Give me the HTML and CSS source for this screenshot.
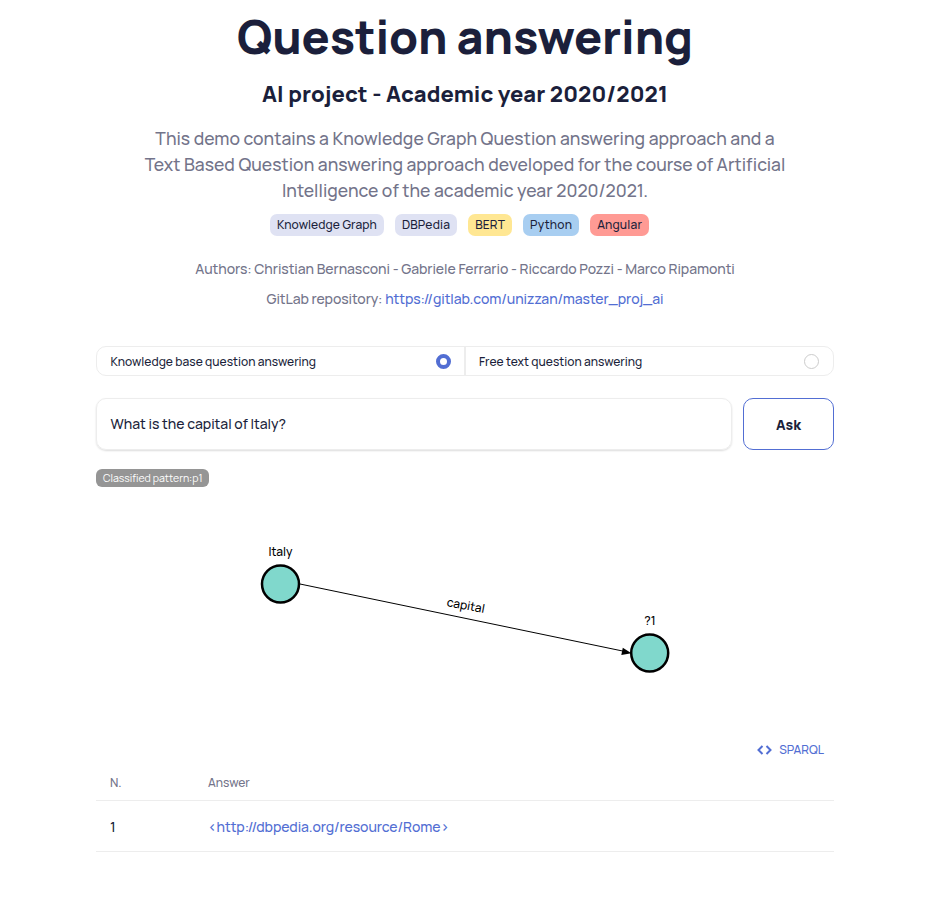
FILE: index.html
```html
<!DOCTYPE html>
<html lang="en">
<head>
<meta charset="utf-8">
<title>Question answering</title>
<link rel="stylesheet" href="styles.css">
</head>
<body>
<main class="page">
  <header class="intro">
    <h1 class="title">Question answering</h1>
    <h2 class="subtitle">AI project - Academic year 2020/2021</h2>
    <p class="lead">This demo contains a Knowledge Graph Question answering approach and a<br>Text Based Question answering approach developed for the course of Artificial<br>Intelligence of the academic year 2020/2021.</p>
    <div class="tags">
      <span class="tag">Knowledge Graph</span>
      <span class="tag">DBPedia</span>
      <span class="tag bert">BERT</span>
      <span class="tag python">Python</span>
      <span class="tag angular">Angular</span>
    </div>
    <p class="meta">Authors: Christian Bernasconi - Gabriele Ferrario - Riccardo Pozzi - Marco Ripamonti</p>
    <p class="meta">GitLab repository: <a class="link" href="#">https://gitlab.com/unizzan/master_proj_ai</a></p>
  </header>
  <div class="modes">
    <label class="mode">Knowledge base question answering<i class="radio checked"></i></label>
    <label class="mode">Free text question answering<i class="radio"></i></label>
  </div>
  <div class="ask-row">
    <div class="field">What is the capital of Italy?</div>
    <button class="ask">Ask</button>
  </div>
  <div class="badge">Classified pattern:p1</div>
  <svg class="graph" width="738" height="240" viewBox="96 495 738 240">
    <line x1="300" y1="584" x2="624" y2="651.3" stroke="#000" stroke-width="1"/>
    <path d="M631.5 653.3L621.300 655L622.800 647.800Z"/>
    <circle class="node" cx="280.500" cy="584" r="18.500"/>
    <circle class="node" cx="649.700" cy="653" r="18.500"/>
    <text x="280.500" y="556">Italy</text>
    <text x="650" y="625">?1</text>
    <text transform="translate(465 609.500) rotate(10.500)">capital</text>
  </svg>
  <div class="actions"><a class="sparql" href="#"><svg width="15" height="10" viewBox="0 0 15 10"><path d="M5.500 1L1.500 5L5.500 9M9.500 1L13.500 5L9.500 9"/></svg><span>SPARQL</span></a></div>
  <table class="answers">
    <thead><tr><th class="num">N.</th><th>Answer</th></tr></thead>
    <tbody><tr><td>1</td><td><a class="link" href="#">&lt;http://dbpedia.org/resource/Rome&gt;</a></td></tr></tbody>
  </table>
</main>
</body>
</html>
```
FILE: styles.css
```css
* { box-sizing: border-box; }
body { margin: 0; background: #fff; color: #1b1f3b; font-family: Manrope, Inter, sans-serif; font-size: 14px; font-weight: 500; }
.page { width: 738px; margin-left: 96px; padding-top: 8px; }
.intro { text-align: center; }
.title { margin: 0; font-size: 46.5px; line-height: 56px; font-weight: 800; letter-spacing: -0.17px; }
.subtitle { margin: 16px 0 0; font-size: 22px; line-height: 28px; font-weight: 800; letter-spacing: 0.08px; }
.lead { margin: 17px 0 0; font-size: 17.5px; line-height: 26px; letter-spacing: 0.025px; color: #73748a; }
.tags { display: flex; justify-content: center; gap: 11px; margin: 11px 11px 0 0; }
.tag { height: 22px; padding: 0 7px; border-radius: 7px; font-size: 12px; line-height: 22px; letter-spacing: 0.18px; background: #dfe2f3; }
.tag:first-child { letter-spacing: 0.076px; }
.bert { background: #ffe793; }
.python { background: #a8cef1; }
.angular { background: #ff9a94; }
.meta { margin: 0; padding-top: 6px; line-height: 24px; letter-spacing: -0.07px; color: #73748a; }
.tags + .meta { margin-top: 15px; }
.link { color: #526ed3; text-decoration: none; }
.modes { display: grid; grid-template-columns: 1fr 1fr; height: 30px; margin-top: 35px; border: 1px solid #ededed; border-radius: 10px; }
.mode { display: flex; align-items: center; justify-content: space-between; padding: 0 14px 0 13.5px; font-size: 12px; }
.mode + .mode { margin-left: -1px; padding-left: 13px; border-left: 2px solid #ededed; }
.radio { width: 15px; height: 15px; border: 1px solid #ccc; border-radius: 50%; }
.checked { border: 4px solid #526ed3; }
.ask-row { display: flex; gap: 11px; margin-top: 22px; }
.field { flex: 1; height: 52px; padding: 0 13.5px; border: 1px solid #ededed; border-radius: 10px; line-height: 50px; letter-spacing: -0.04px; box-shadow: 0 1px 2px rgba(0,0,0,.14); }
.ask { width: 91px; height: 52px; padding: 0; border: 1px solid #526ed3; border-radius: 10px; background: #fff; color: #1b1f3b; font: 800 14px Manrope, Inter, sans-serif; }
.badge { width: 113px; height: 18px; margin-top: 19px; padding-left: 7px; border-radius: 6px; background: #959595; color: #fff; font-size: 10.5px; font-weight: 400; line-height: 18px; letter-spacing: -0.02px; }
.graph { display: block; margin-top: 8px; font-size: 12px; text-anchor: middle; }
.node { fill: #80d8cc; stroke: #000; stroke-width: 2.5px; }
.actions { display: flex; justify-content: flex-end; height: 29px; padding-right: 10px; }
.sparql { display: flex; align-items: center; gap: 7px; color: #526ed3; font-size: 12px; text-decoration: none; }
.sparql path { fill: none; stroke: #526ed3; stroke-width: 2px; }
.answers { width: 738px; border-collapse: collapse; table-layout: fixed; }
.answers th, .answers td { padding: 2px 14px 0; border-bottom: 1px solid #ededed; text-align: left; font-weight: 500; }
.answers th { height: 36px; font-size: 12px; color: #73748a; }
.answers td { height: 51px; letter-spacing: -0.09px; }
.answers .num { width: 98px; }
```
